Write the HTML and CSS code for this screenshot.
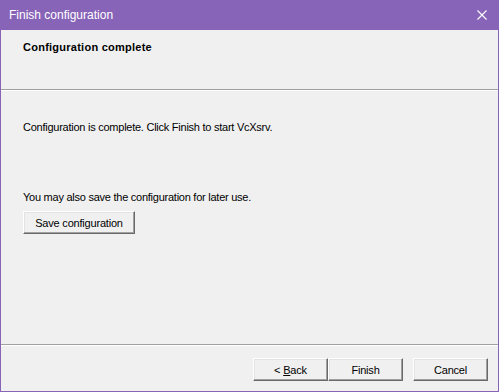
FILE: index.html
```html
<!DOCTYPE html>
<html lang="en">
<head>
    <meta charset="UTF-8">
    <title>Finish configuration</title>
    <link rel="stylesheet" href="styles.css">
</head>
<body>
    <div class="window">
        <div class="titlebar">
            <span class="title">Finish configuration</span>
            <svg class="close" width="10" height="10" viewBox="0 0 10 10">
                <path d="M0.5 0.5 L9.5 9.5 M9.5 0.5 L0.5 9.5" stroke="#fff" stroke-width="1.1"/>
            </svg>
        </div>
        <div class="frame">
            <div class="header">
                <h1>Configuration complete</h1>
            </div>
            <div class="sep"></div>
            <div class="content">
                <p class="intro">Configuration is complete. Click Finish to start VcXsrv.</p>
                <p class="save-text">You may also save the configuration for later use.</p>
                <button class="btn save">Save configuration</button>
            </div>
            <div class="sep"></div>
            <div class="footer">
                <button class="btn"><span>&lt; <u>B</u>ack</span></button>
                <button class="btn">Finish</button>
                <button class="btn cancel">Cancel</button>
            </div>
        </div>
    </div>
</body>
</html>
```

FILE: styles.css
```css
body { margin: 0; background: #f0f0f0; font-family: "Liberation Sans", Arial, sans-serif; font-size: 11px; color: #000; }
.window { width: 499px; height: 392px; display: flex; flex-direction: column; }
.titlebar { height: 30px; background: #8764b8; display: flex; align-items: center; justify-content: space-between; padding: 0 12px 0 9px; flex-shrink: 0; }
.title { color: #fff; font-size: 12px; }
.close { display: block; }
.frame { flex: 1; display: flex; flex-direction: column; border: 1px solid #8764b8; border-top: none; background: #f0f0f0; }
.header { height: 59px; padding: 11px 22px 0; box-sizing: border-box; }
.header h1 { margin: 0; font-size: 11px; font-weight: bold; line-height: 13px; letter-spacing: 0.25px; }
.sep { height: 1px; border-top: 1px solid #a0a0a0; background: #fff; }
.content { flex: 1; padding: 30px 22px 0; }
.content p { margin: 0; line-height: 13px; letter-spacing: -0.25px; }
.intro { margin-bottom: 57px !important; }
.save-text { margin-bottom: 7px !important; }
.btn { font-family: inherit; font-size: 11px; letter-spacing: -0.2px; color: #000; height: 23px; width: 75px; padding: 0; background: #f0f0f0; border: 1px solid; border-color: #fff #696969 #696969 #fff; box-shadow: inset -1px -1px #a0a0a0, inset 1px 1px #e3e3e3; }
.btn.save { width: 112px; }
.footer { height: 45px; display: flex; justify-content: flex-end; align-items: flex-start; padding: 12px 10px 0 0; box-sizing: border-box; }
.footer .cancel { margin-left: 10px; }
```
